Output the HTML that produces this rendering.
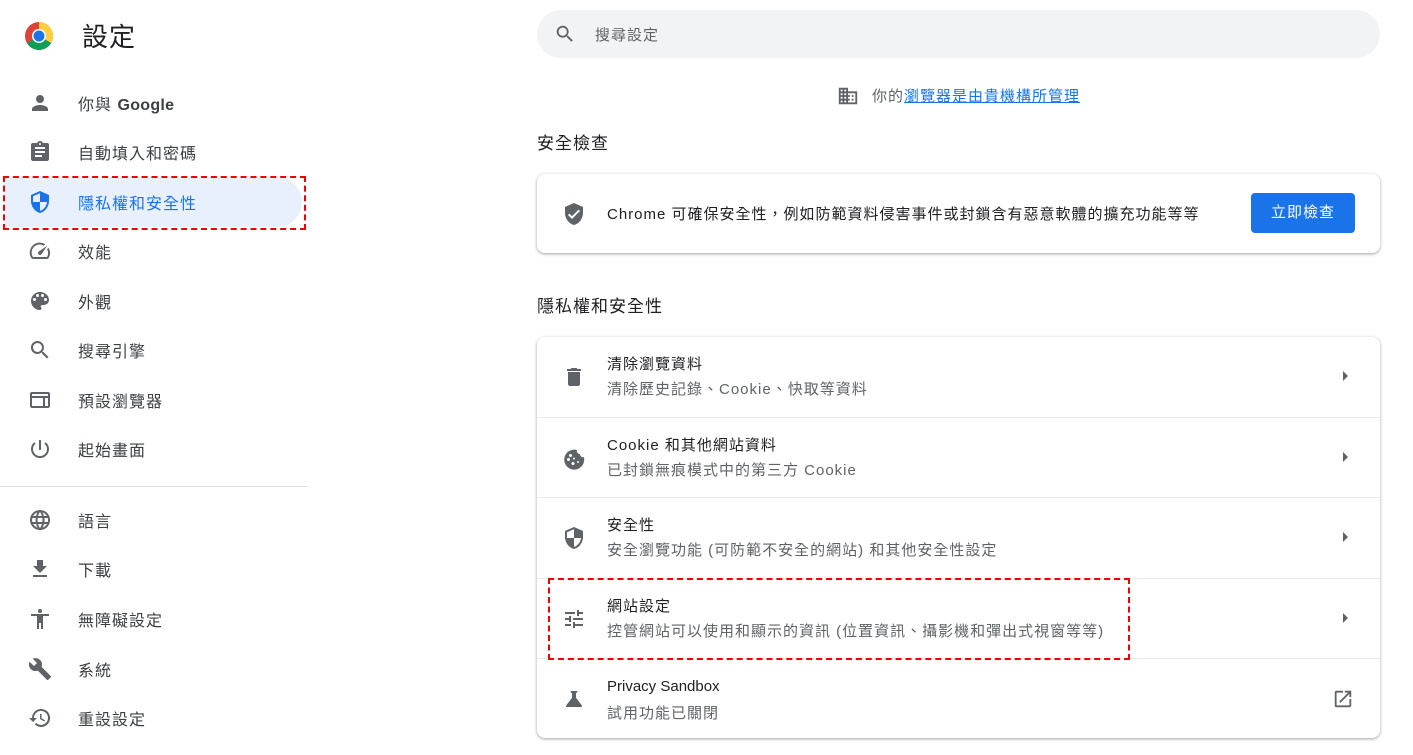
<html><head><style>
body{margin:0;width:1413px;height:755px;background:#fff;font-family:"Liberation Sans","Noto Sans CJK TC",sans-serif;color:#202124;position:relative;overflow:hidden;letter-spacing:1px}
.a{position:absolute}
.nav{position:absolute;left:0;height:48px;width:300px;display:flex;align-items:center;font-size:16px;color:#3c4043}
.nav svg{position:absolute;left:28px;width:24px;height:24px;fill:#5f6368}
.nav span{position:absolute;left:78px}
.card{position:absolute;left:537px;width:843px;background:#fff;border-radius:8px;box-shadow:0 1px 2px rgba(60,64,67,.3),0 1px 3px 1px rgba(60,64,67,.15)}
.row{position:absolute;left:0;width:843px;height:80px;border-top:1px solid #e8eaed}
.row svg.i{position:absolute;left:25px;top:28px;width:24px;height:24px;fill:#5f6368}
.row .t{position:absolute;left:70px;top:16px;font-size:15px}
.row .s{position:absolute;left:70px;top:41px;font-size:15px;color:#5f6368}
.row .ar{position:absolute;right:32px;top:34px;width:0;height:0;border-left:5px solid #5f6368;border-top:5px solid transparent;border-bottom:5px solid transparent}
</style></head><body>
<svg class="a" style="left:24px;top:21px" width="30" height="30" viewBox="0 0 30 30"><circle cx="15" cy="15" r="14" fill="#db4437"/><path d="M15 15 L15 1 A14 14 0 0 1 27.1 22Z" fill="#ffcd40"/><path d="M15 15 L2.9 22 A14 14 0 0 0 27.1 22Z" fill="#0f9d58"/><circle cx="15" cy="15" r="7" fill="#fff"/><circle cx="15" cy="15" r="5.5" fill="#1a73e8"/></svg>
<div class="a" style="left:82px;top:17px;font-size:26px">設定</div>
<div class="a" style="left:537px;top:10px;width:843px;height:48px;border-radius:24px;background:#f1f3f4"></div>
<svg class="a" style="left:554px;top:23px" width="22" height="22" viewBox="0 0 24 24" fill="#5f6368"><path d="M15.5 14h-.8l-.3-.3A6.5 6.5 0 1 0 9.5 16a6.5 6.5 0 0 0 4.2-1.6l.3.3v.8l5 5 1.5-1.5-5-5zm-6 0a4.5 4.5 0 1 1 0-9 4.5 4.5 0 0 1 0 9z"/></svg>
<div class="a" style="left:595px;top:24px;font-size:15px;color:#5f6368">搜尋設定</div>
<svg class="a" style="left:837px;top:85px" width="22" height="22" viewBox="0 0 24 24" fill="#5f6368"><path d="M12 7V3H2v18h20V7H12zM6 19H4v-2h2v2zm0-4H4v-2h2v2zm0-4H4V9h2v2zm0-4H4V5h2v2zm4 12H8v-2h2v2zm0-4H8v-2h2v2zm0-4H8V9h2v2zm0-4H8V5h2v2zm10 12h-8v-2h2v-2h-2v-2h2v-2h-2V9h8v10zm-2-8h-2v2h2v-2zm0 4h-2v2h2v-2z"/></svg>
<div class="a" style="left:872px;top:85px;font-size:15px;color:#5f6368">你的<span style="color:#1a73e8;text-decoration:underline">瀏覽器是由貴機構所管理</span></div>
<div class="a" style="left:537px;top:129px;font-size:17px">安全檢查</div>
<div class="card" style="top:174px;height:79px">
<svg class="a" style="left:25px;top:28px" width="24" height="24" viewBox="0 0 24 24" fill="#5f6368"><path d="M12 1 3 5v6c0 5.5 3.8 10.7 9 12 5.2-1.3 9-6.5 9-12V5l-9-4zm-2 16-4-4 1.4-1.4 2.6 2.6 6.6-6.6L18 9l-8 8z"/></svg>
<div class="a" style="left:70px;top:29px;font-size:15px">Chrome 可確保安全性，例如防範資料侵害事件或封鎖含有惡意軟體的擴充功能等等</div>
<div class="a" style="left:714px;top:19px;width:104px;height:40px;background:#1a73e8;border-radius:4px;color:#fff;font-size:15px;text-align:center;line-height:40px">立即檢查</div>
</div>
<div class="a" style="left:537px;top:292px;font-size:17px">隱私權和安全性</div>
<div class="card" style="top:337px;height:401px">
<div class="row" style="top:0;border-top:none"><svg class="i" viewBox="0 0 24 24"><path d="M6 19c0 1.1.9 2 2 2h8c1.1 0 2-.9 2-2V7H6v12zM19 4h-3.5l-1-1h-5l-1 1H5v2h14V4z"/></svg><div class="t">清除瀏覽資料</div><div class="s">清除歷史記錄、Cookie、快取等資料</div><div class="ar"></div></div>
<div class="row" style="top:80px"><svg class="i" viewBox="0 0 24 24"><path d="M21.9 11.1A3 3 0 0 1 18 8a3 3 0 0 1-3-4 10 10 0 1 0 6.9 7.1zM8.5 8a1.5 1.5 0 1 1 0 3 1.5 1.5 0 0 1 0-3zm-2 7a1.5 1.5 0 1 1 0-3 1.5 1.5 0 0 1 0 3zm4.5 4a1.5 1.5 0 1 1 0-3 1.5 1.5 0 0 1 0 3zm1-5.5a1 1 0 1 1 0-2 1 1 0 0 1 0 2zm4 3.5a1 1 0 1 1 0-2 1 1 0 0 1 0 2z"/></svg><div class="t">Cookie 和其他網站資料</div><div class="s">已封鎖無痕模式中的第三方 Cookie</div><div class="ar"></div></div>
<div class="row" style="top:160px;height:81px"><svg class="i" viewBox="0 0 24 24"><path d="M12 1 3 5v6c0 5.5 3.8 10.7 9 12 5.2-1.3 9-6.5 9-12V5l-9-4zm0 11h7c-.5 4.1-3.3 7.8-7 8.9V12H5V6.3l7-3.1V12z"/></svg><div class="t">安全性</div><div class="s">安全瀏覽功能 (可防範不安全的網站) 和其他安全性設定</div><div class="ar"></div></div>
<div class="row" style="top:241px"><svg class="i" viewBox="0 0 24 24"><path d="M3 17v2h6v-2H3zM3 5v2h10V5H3zm10 16v-2h8v-2h-8v-2h-2v6h2zM7 9v2H3v2h4v2h2V9H7zm14 4v-2H11v2h10zm-6-4h2V7h4V5h-4V3h-2v6z"/></svg><div class="t">網站設定</div><div class="s">控管網站可以使用和顯示的資訊 (位置資訊、攝影機和彈出式視窗等等)</div><div class="ar"></div></div>
<div class="row" style="top:321px"><svg class="i" viewBox="0 0 24 24"><path d="M19.8 18.4 14 10.7V6.5l1.4-1.7c.3-.3.1-.8-.4-.8H9c-.4 0-.7.5-.4.8L10 6.5v4.2l-5.8 7.7c-.5.7 0 1.6.8 1.6h14c.8 0 1.3-.9.8-1.6z"/></svg><div class="t" style="top:19px;letter-spacing:0">Privacy Sandbox</div><div class="s" style="top:43px">試用功能已關閉</div>
<svg class="a" style="right:26px;top:29px" width="22" height="22" viewBox="0 0 24 24" fill="#5f6368"><path d="M19 19H5V5h7V3H5a2 2 0 0 0-2 2v14a2 2 0 0 0 2 2h14c1.1 0 2-.9 2-2v-7h-2v7zM14 3v2h3.6l-9.8 9.8 1.4 1.4L19 6.4V10h2V3h-7z"/></svg></div>
</div>
<div class="a" style="left:548px;top:578px;width:578px;height:78px;border:2px dashed #e00"></div>
<div class="a" style="left:4px;top:177px;width:298px;height:50px;background:#e8f0fe;border-radius:0 25px 25px 0"></div>
<div class="a" style="left:3px;top:176px;width:299px;height:50px;border:2px dashed #e00"></div>
<div class="nav" style="top:79px"><svg viewBox="0 0 24 24"><path d="M12 12a4 4 0 1 0 0-8 4 4 0 0 0 0 8zm0 2c-2.7 0-8 1.3-8 4v2h16v-2c0-2.7-5.3-4-8-4z"/></svg><span>你與 <b style="color:#3c4043;letter-spacing:0.3px">Google</b></span></div>
<div class="nav" style="top:128px"><svg viewBox="0 0 24 24"><path d="M19 3h-4.2A3 3 0 0 0 12 1a3 3 0 0 0-2.8 2H5a2 2 0 0 0-2 2v14c0 1.1.9 2 2 2h14c1.1 0 2-.9 2-2V5a2 2 0 0 0-2-2zm-7 0a1 1 0 1 1 0 2 1 1 0 0 1 0-2zm2 14H7v-2h7v2zm3-4H7v-2h10v2zm0-4H7V7h10v2z"/></svg><span>自動填入和密碼</span></div>
<div class="nav" style="top:178px;color:#1a73e8"><svg viewBox="0 0 24 24" style="fill:#1a73e8"><path d="M12 1 3 5v6c0 5.5 3.8 10.7 9 12 5.2-1.3 9-6.5 9-12V5l-9-4zm0 11h7c-.5 4.1-3.3 7.8-7 8.9V12H5V6.3l7-3.1V12z"/></svg><span>隱私權和安全性</span></div>
<div class="nav" style="top:227px"><svg viewBox="0 0 24 24"><path d="M20.4 8.6 19.2 10.4A8 8 0 0 1 19 18H5a8 8 0 0 1 10.6-11.4l1.8-1.2A10 10 0 0 0 3.3 19a2 2 0 0 0 1.7 1h14a2 2 0 0 0 1.7-1 10 10 0 0 0-.3-10.4zM10.6 15.4a2 2 0 0 0 2.8 0l5.7-8.5-8.5 5.7a2 2 0 0 0 0 2.8z"/></svg><span>效能</span></div>
<div class="nav" style="top:277px"><svg viewBox="0 0 24 24"><path d="M12 3a9 9 0 0 0 0 18c.8 0 1.5-.7 1.5-1.5 0-.4-.1-.7-.4-1-.2-.3-.4-.6-.4-1 0-.8.7-1.5 1.5-1.5H16a5 5 0 0 0 5-5c0-4.4-4-8-9-8zm-5.5 9a1.5 1.5 0 1 1 0-3 1.5 1.5 0 0 1 0 3zm3-4a1.5 1.5 0 1 1 0-3 1.5 1.5 0 0 1 0 3zm5 0a1.5 1.5 0 1 1 0-3 1.5 1.5 0 0 1 0 3zm3 4a1.5 1.5 0 1 1 0-3 1.5 1.5 0 0 1 0 3z"/></svg><span>外觀</span></div>
<div class="nav" style="top:326px"><svg viewBox="0 0 24 24"><path d="M15.5 14h-.8l-.3-.3A6.5 6.5 0 1 0 9.5 16a6.5 6.5 0 0 0 4.2-1.6l.3.3v.8l5 5 1.5-1.5-5-5zm-6 0a4.5 4.5 0 1 1 0-9 4.5 4.5 0 0 1 0 9z"/></svg><span>搜尋引擎</span></div>
<div class="nav" style="top:376px"><svg viewBox="0 0 24 24"><path d="M20 4H4a2 2 0 0 0-2 2v12c0 1.1.9 2 2 2h16c1.1 0 2-.9 2-2V6a2 2 0 0 0-2-2zm-5 14H4v-8h11v8zm5 0h-3v-8h3v8zm0-10H4V6h16v2z"/></svg><span>預設瀏覽器</span></div>
<div class="nav" style="top:425px"><svg viewBox="0 0 24 24"><path d="M13 3h-2v10h2V3zm4.8 2.2-1.4 1.4A7 7 0 1 1 5 12c0-2.2 1-4.1 2.6-5.4L6.2 5.2A9 9 0 1 0 17.8 5.2z"/></svg><span>起始畫面</span></div>
<div class="a" style="left:0;top:486px;width:307px;height:1px;background:#dadce0"></div>
<div class="nav" style="top:496px"><svg viewBox="0 0 24 24"><path d="M12 2a10 10 0 1 0 0 20 10 10 0 0 0 0-20zm6.9 6h-3a15.6 15.6 0 0 0-1.4-3.6A8 8 0 0 1 18.9 8zM12 4c.8 1.2 1.5 2.5 1.9 4h-3.8c.4-1.4 1.1-2.8 1.9-4zM4.3 14a8 8 0 0 1 0-4h3.4a16 16 0 0 0 0 4H4.3zm.8 2h3a15.6 15.6 0 0 0 1.4 3.6A8 8 0 0 1 5.1 16zm3-8h-3a8 8 0 0 1 4.3-3.6C8.8 5.6 8.4 6.8 8.1 8zM12 20c-.8-1.2-1.5-2.5-1.9-4h3.800c-.4 1.4-1.1 2.8-1.9 4zm2.3-6H9.7a14.7 14.7 0 0 1 0-4h4.6a14.7 14.7 0 0 1 0 4zm.3 5.6c.6-1.1 1.1-2.3 1.4-3.6h3a8 8 0 0 1-4.4 3.6zm1.8-5.6a16 16 0 0 0 0-4h3.4a8 8 0 0 1 0 4h-3.4z"/></svg><span>語言</span></div>
<div class="nav" style="top:545px"><svg viewBox="0 0 24 24"><path d="M19 9h-4V3H9v6H5l7 7 7-7zM5 18v2h14v-2H5z"/></svg><span>下載</span></div>
<div class="nav" style="top:595px"><svg viewBox="0 0 24 24"><path d="M12 2a2 2 0 1 1 0 4 2 2 0 0 1 0-4zm9 7h-6v13h-2v-6h-2v6H9V9H3V7h18v2z"/></svg><span>無障礙設定</span></div>
<div class="nav" style="top:645px"><svg viewBox="0 0 24 24"><path d="M22.7 19 13.6 9.9c.9-2.3.4-5-1.5-6.9-2-2-5-2.4-7.4-1.3L9 6 6 9 1.6 4.7C.4 7.1.9 10.1 2.9 12.1c1.9 1.9 4.6 2.4 6.9 1.5l9.1 9.1c.4.4 1 .4 1.4 0l2.3-2.3c.5-.4.5-1.1.1-1.4z"/></svg><span>系統</span></div>
<div class="nav" style="top:694px"><svg viewBox="0 0 24 24"><path d="M13 3a9 9 0 0 0-9 9H1l3.9 3.9.1.1L9 12H6a7 7 0 1 1 2.1 4.9l-1.4 1.4A9 9 0 1 0 13 3zm-1 5v5l4.3 2.5.7-1.2-3.5-2.1V8H12z"/></svg><span>重設設定</span></div>
</body></html>
